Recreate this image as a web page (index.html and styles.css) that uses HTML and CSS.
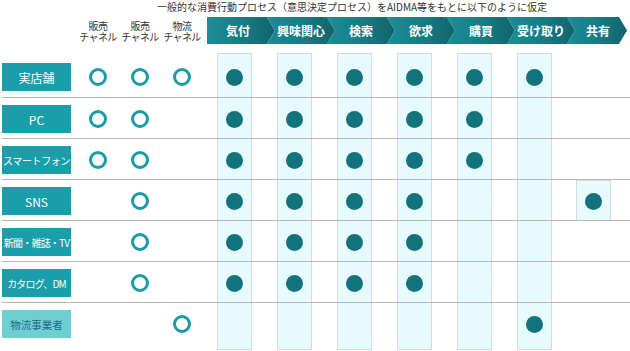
FILE: index.html
```html
<!DOCTYPE html>
<html lang="ja">
<head>
<meta charset="utf-8">
<title>AIDMA</title>
<link rel="stylesheet" href="styles.css">
</head>
<body>
<div class="page">
  <div class="title">一般的な消費行動プロセス（意思決定プロセス）をAIDMA等をもとに以下のように仮定</div>
  <div class="head">
    <div class="ch-label">販売<br>チャネル</div>
    <div class="ch-label">販売<br>チャネル</div>
    <div class="ch-label">物流<br>チャネル</div>
    <div class="steps">
      <div class="step first">気付</div>
      <div class="step">興味関心</div>
      <div class="step">検索</div>
      <div class="step">欲求</div>
      <div class="step">購買</div>
      <div class="step">受け取り</div>
      <div class="step last">共有</div>
    </div>
  </div>

  <div class="grid">
    <!-- column backgrounds -->
    <div class="col a1"></div>
    <div class="col a2"></div>
    <div class="col a3"></div>
    <div class="col a4"></div>
    <div class="col a5"></div>
    <div class="col a6"></div>
    <div class="col share r4"></div>

    <!-- row separators -->
    <div class="line r1"></div>
    <div class="line r2"></div>
    <div class="line r3"></div>
    <div class="line r4"></div>
    <div class="line r5"></div>
    <div class="line r6"></div>

    <!-- row 1 -->
    <div class="label r1">実店舗</div>
    <div class="cell k1 r1"><span class="ring"></span></div>
    <div class="cell k2 r1"><span class="ring"></span></div>
    <div class="cell k3 r1"><span class="ring"></span></div>
    <div class="cell a1 r1"><span class="dot"></span></div>
    <div class="cell a2 r1"><span class="dot"></span></div>
    <div class="cell a3 r1"><span class="dot"></span></div>
    <div class="cell a4 r1"><span class="dot"></span></div>
    <div class="cell a5 r1"><span class="dot"></span></div>
    <div class="cell a6 r1"><span class="dot"></span></div>

    <!-- row 2 -->
    <div class="label r2">PC</div>
    <div class="cell k1 r2"><span class="ring"></span></div>
    <div class="cell k2 r2"><span class="ring"></span></div>
    <div class="cell a1 r2"><span class="dot"></span></div>
    <div class="cell a2 r2"><span class="dot"></span></div>
    <div class="cell a3 r2"><span class="dot"></span></div>
    <div class="cell a4 r2"><span class="dot"></span></div>
    <div class="cell a5 r2"><span class="dot"></span></div>

    <!-- row 3 -->
    <div class="label r3 small">スマートフォン</div>
    <div class="cell k1 r3"><span class="ring"></span></div>
    <div class="cell k2 r3"><span class="ring"></span></div>
    <div class="cell a1 r3"><span class="dot"></span></div>
    <div class="cell a2 r3"><span class="dot"></span></div>
    <div class="cell a3 r3"><span class="dot"></span></div>
    <div class="cell a4 r3"><span class="dot"></span></div>
    <div class="cell a5 r3"><span class="dot"></span></div>

    <!-- row 4 -->
    <div class="label r4">SNS</div>
    <div class="cell k2 r4"><span class="ring"></span></div>
    <div class="cell a1 r4"><span class="dot"></span></div>
    <div class="cell a2 r4"><span class="dot"></span></div>
    <div class="cell a3 r4"><span class="dot"></span></div>
    <div class="cell a4 r4"><span class="dot"></span></div>
    <div class="cell a7 r4"><span class="dot"></span></div>

    <!-- row 5 -->
    <div class="label r5 small tight">新聞・雑誌・TV</div>
    <div class="cell k2 r5"><span class="ring"></span></div>
    <div class="cell a1 r5"><span class="dot"></span></div>
    <div class="cell a2 r5"><span class="dot"></span></div>
    <div class="cell a3 r5"><span class="dot"></span></div>
    <div class="cell a4 r5"><span class="dot"></span></div>

    <!-- row 6 -->
    <div class="label r6 small tight">カタログ、DM</div>
    <div class="cell k2 r6"><span class="ring"></span></div>
    <div class="cell a1 r6"><span class="dot"></span></div>
    <div class="cell a2 r6"><span class="dot"></span></div>
    <div class="cell a3 r6"><span class="dot"></span></div>
    <div class="cell a4 r6"><span class="dot"></span></div>

    <!-- row 7 -->
    <div class="label r7 alt">物流事業者</div>
    <div class="cell k3 r7"><span class="ring"></span></div>
    <div class="cell a6 r7"><span class="dot"></span></div>
  </div>
</div>
</body>
</html>
```
FILE: styles.css
```css
html, body {
  margin: 0;
  padding: 0;
  background: #ffffff;
}

body {
  font-family: "Noto Sans CJK JP", "Noto Sans", sans-serif;
  color: #333333;
  width: 630px;
  height: 351px;
  overflow: hidden;
}

.page {
  width: 630px;
}

.title {
  height: 14px;
  line-height: 14px;
  font-size: 10px;
  padding-left: 157px;
  white-space: nowrap;
  color: #333;
}

.head {
  display: flex;
  align-items: center;
  height: 27px;
  margin-top: 3px;
  margin-bottom: 9px;
  padding-left: 77px;
}

.ch-label {
  width: 42px;
  font-size: 10px;
  line-height: 11px;
  text-align: center;
  white-space: nowrap;
  color: #333;
  letter-spacing: -0.6px;
}

.steps {
  display: flex;
  margin-left: 4px;
  height: 27px;
}

.step {
  width: 68px;
  height: 27px;
  margin-right: -8px;
  box-sizing: border-box;
  padding: 0 6px;
  display: flex;
  align-items: center;
  justify-content: center;
  color: #ffffff;
  font-size: 12px;
  font-weight: bold;
  white-space: nowrap;
  background: linear-gradient(90deg, #1c8d97 0%, #177a83 55%, #12636b 100%);
  clip-path: polygon(0 0, 60px 0, 68px 50%, 60px 100%, 0 100%, 8px 50%);
}

.step.first {
  clip-path: polygon(0 0, 60px 0, 68px 50%, 60px 100%, 0 100%);
  padding: 0 10px 0 4px;
}

.step.last {
  width: 60px;
  margin-right: 0;
  padding: 0 4px 0 6px;
  clip-path: polygon(0 0, 52px 0, 60px 50%, 52px 100%, 0 100%, 8px 50%);
}

/* main grid */
.grid {
  display: grid;
  grid-template-columns: 2px 69px 6px 42px 42px 42px 4px repeat(7, 60px) 3px;
  grid-template-rows: 3px 42px repeat(6, 41px) 6px;
}

.r1 { grid-row: 2; }
.r2 { grid-row: 3; }
.r3 { grid-row: 4; }
.r4 { grid-row: 5; }
.r5 { grid-row: 6; }
.r6 { grid-row: 7; }
.r7 { grid-row: 8; }

.k1 { grid-column: 4; }
.k2 { grid-column: 5; }
.k3 { grid-column: 6; }
.a1 { grid-column: 8; }
.a2 { grid-column: 9; }
.a3 { grid-column: 10; }
.a4 { grid-column: 11; }
.a5 { grid-column: 12; }
.a6 { grid-column: 13; }
.a7 { grid-column: 14; }

.col {
  grid-row: 1 / -1;
  justify-self: start;
  margin-left: 10px;
  width: 35px;
  box-sizing: border-box;
  border: 1px solid #d3dbdd;
  background: #e7fafd;
}

.col.share {
  grid-column: 14;
  grid-row: 5;
  margin-left: 9px;
}

.line {
  grid-column: 2 / -1;
  align-self: end;
  height: 1px;
  background: #b6b6b6;
}

.label {
  grid-column: 2;
  align-self: start;
  margin-top: 7px;
  height: 28px;
  display: flex;
  align-items: center;
  justify-content: center;
  background: #1a9eaa;
  color: #ffffff;
  font-size: 12px;
  white-space: nowrap;
}

.label.small {
  font-size: 10px;
  letter-spacing: -0.4px;
}

.label.tight {
  letter-spacing: -0.8px;
}

.label.alt {
  background: #6dcfcf;
  color: #1d6a8a;
  font-size: 10.5px;
}

.cell {
  align-self: start;
  margin-top: 7px;
  height: 28px;
  display: flex;
  align-items: center;
  justify-content: center;
}

.cell.a1, .cell.a2, .cell.a3, .cell.a4, .cell.a5, .cell.a6 {
  justify-self: start;
  margin-left: 10px;
  width: 35px;
}

.cell.a7 {
  justify-self: start;
  margin-left: 9px;
  width: 35px;
}

.ring {
  display: block;
  width: 18px;
  height: 18px;
  box-sizing: border-box;
  border: 3px solid #1b9ba8;
  border-radius: 50%;
  background: #ffffff;
}

.dot {
  display: block;
  width: 17px;
  height: 17px;
  border-radius: 50%;
  background: #13737c;
}
```
